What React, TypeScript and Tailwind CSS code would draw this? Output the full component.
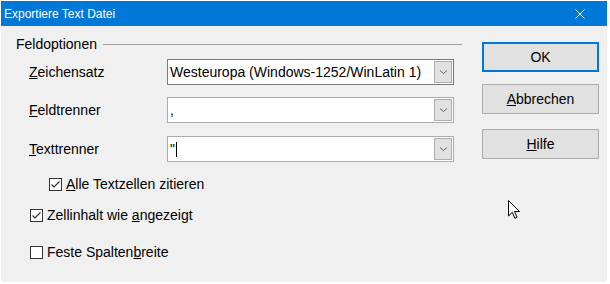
import React from 'react';

const font = 'font-["Liberation_Sans",Arial,sans-serif]';

const Chevron = () => (
  <svg width="9" height="6" viewBox="0 0 9 6" className="block">
    <path d="M1 1.5 L4.5 4.5 L8 1.5" fill="none" stroke="#606060" strokeWidth="1" />
  </svg>
);

const Combo: React.FC<{ value: React.ReactNode; dark?: boolean }> = ({ value, dark }) => (
  <div
    className={`flex items-center h-[26px] w-[287px] bg-white border ${
      dark ? 'border-[#7a7a7a]' : 'border-[#acacac]'
    } pl-[2px] pr-px`}
  >
    <div className="flex-1 flex items-center text-[14px] text-black leading-none">{value}</div>
    <div className="w-[18px] h-[22px] bg-[#e1e1e1] border border-[#adadad] flex items-center justify-center">
      <Chevron />
    </div>
  </div>
);

const CheckBox: React.FC<{ checked?: boolean }> = ({ checked }) => (
  <div className="w-[13px] h-[13px] border border-[#333] bg-white flex items-center justify-center shrink-0">
    {checked && (
      <svg width="11" height="11" viewBox="0 0 11 11" className="block">
        <path d="M1.5 5.5 L4 8 L9.5 2.5" fill="none" stroke="#333" strokeWidth="1.2" />
      </svg>
    )}
  </div>
);

const Row: React.FC<{ label: React.ReactNode; children: React.ReactNode; className?: string }> = ({
  label,
  children,
  className = '',
}) => (
  <div className={`flex items-center ${className}`}>
    <div className="w-[138px] text-[14px] text-black">{label}</div>
    {children}
  </div>
);

const Btn: React.FC<{ children: React.ReactNode; primary?: boolean }> = ({ children, primary }) => (
  <div
    className={`h-[30px] w-[117px] bg-[#e1e1e1] flex items-center justify-center text-[14px] text-black ${
      primary ? 'border-2 border-[#0078d7]' : 'border border-[#adadad]'
    }`}
  >
    {children}
  </div>
);

export default function App() {
  return (
    <div className={`w-[610px] h-[284px] bg-white ${font}`}>
      <div className="relative ml-px pt-px w-[607px]">
        <div className="w-[606px] h-[281px] bg-[#f0f0f0] rounded-b-[3px] flex flex-col">
          {/* Title bar */}
          <div className="h-[25px] bg-[#0078d7] flex items-center justify-between pl-[3px] pr-[22px] text-white text-[12px]">
            <span>Exportiere Text Datei</span>
            <svg width="10" height="10" viewBox="0 0 10 10" className="block">
              <path d="M0.5 0.5 L9.5 9.5 M9.5 0.5 L0.5 9.5" stroke="#fff" strokeWidth="1" />
            </svg>
          </div>

          <div className="flex flex-1">
            {/* Left: Feldoptionen */}
            <div className="w-[461px] pl-[15px] pt-[10px]">
              <div className="flex items-center gap-[6px] text-[14px] text-black h-[16px]">
                <span>Feldoptionen</span>
                <div className="flex-1 h-px bg-[#a0a0a0]" />
              </div>
              <div className="pl-[13px] pt-[7px] flex flex-col">
                <Row label={<><u>Z</u>eichensatz</>}>
                  <Combo dark value={<span>Westeuropa (Windows-1252/WinLatin 1)</span>} />
                </Row>
                <Row className="mt-[12px]" label={<><u>F</u>eldtrenner</>}>
                  <Combo value={<span>,</span>} />
                </Row>
                <Row className="mt-[13px]" label={<><u>T</u>exttrenner</>}>
                  <Combo
                    value={
                      <span className="flex items-center">
                        "<span className="inline-block w-px h-[15px] bg-black ml-px" />
                      </span>
                    }
                  />
                </Row>
              </div>
              <div className="flex flex-col text-[14px] text-black">
                <div className="flex items-center gap-[4px] pl-[33px] h-[20px] mt-[12px]">
                  <CheckBox checked />
                  <span>
                    <u>A</u>lle Textzellen zitieren
                  </span>
                </div>
                <div className="flex items-center gap-[4px] pl-[14px] h-[20px] mt-[11px]">
                  <CheckBox checked />
                  <span>
                    Zellinhalt wie <u>a</u>ngezeigt
                  </span>
                </div>
                <div className="flex items-center gap-[4px] pl-[14px] h-[20px] mt-[17px]">
                  <CheckBox />
                  <span>
                    Feste Spalten<u>b</u>reite
                  </span>
                </div>
              </div>
            </div>

            {/* Right: buttons */}
            <div className="ml-[20px] pt-[16px] flex flex-col">
              <Btn primary>OK</Btn>
              <div className="mt-[12px]">
                <Btn>
                  <span>
                    <u>A</u>bbrechen
                  </span>
                </Btn>
              </div>
              <div className="mt-[15px]">
                <Btn>
                  <span>
                    <u>H</u>ilfe
                  </span>
                </Btn>
              </div>
            </div>
          </div>
        </div>

        {/* mouse pointer */}
        <svg width="13" height="20" viewBox="0 0 13 20" className="absolute left-[507px] top-[200px]">
          <path
            d="M0.5 0.5 L0.5 16 L4.3 12.3 L6.8 18.3 L9 17.3 L6.5 11.5 L11.5 11.5 Z"
            fill="#fff"
            stroke="#000"
            strokeWidth="1"
          />
        </svg>
      </div>
    </div>
  );
}
